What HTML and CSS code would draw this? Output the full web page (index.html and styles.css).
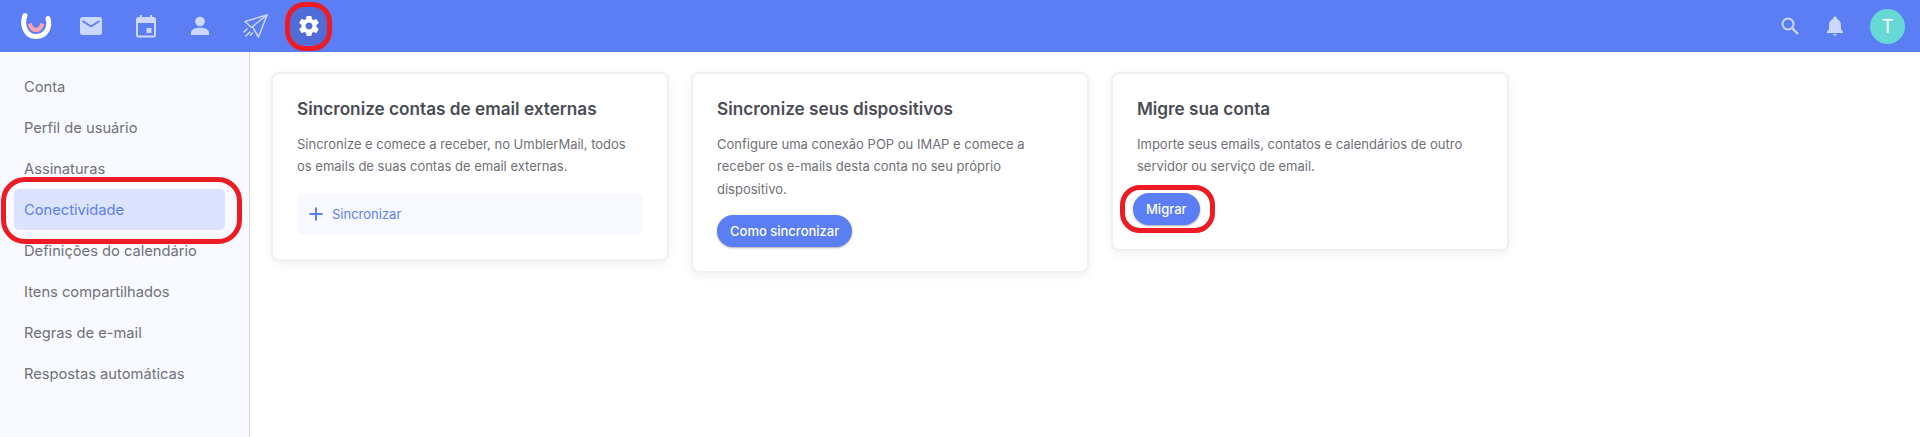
FILE: index.html
```html
<!DOCTYPE html>
<html lang="pt-BR">
<head>
  <meta charset="UTF-8">
  <title>UmblerMail - Conectividade</title>
  <link rel="stylesheet" href="styles.css">
</head>
<body>
  <header class="topbar">
    <nav class="topbar-left">
      <svg class="logo" width="34" height="30" viewBox="0 0 34 30">
        <path d="M6 4.500C2.500 13 6 25.500 17 25.500S31.500 15 29 7.500" fill="none" stroke="#fff" stroke-width="5" stroke-linecap="round"/>
        <path d="M10.500 12.500C12 17 14.500 19 17 19S22 17 23.500 12.500" fill="none" stroke="#ffa3ab" stroke-width="4"/>
      </svg>
      <a class="nav-icon">
        <svg width="24" height="20" viewBox="0 0 24 20">
          <rect x="1" y="1" width="22" height="18" rx="2.500" fill="#ccd8ff"/>
          <path d="M3.500 5l8.500 5.500L20.500 5" fill="none" stroke="#5b7ef5" stroke-width="1.800"/>
        </svg>
      </a>
      <a class="nav-icon">
        <svg width="24" height="24" viewBox="0 0 24 24">
          <path d="M7 1v4M17 1v4" stroke="#ccd8ff" stroke-width="2"/>
          <path d="M4.500 3h15A2.500 2.500 0 0 1 22 5.500v16a2 2 0 0 1-2 2H4a2 2 0 0 1-2-2v-16A2.500 2.500 0 0 1 4.500 3zM4 9v12.500h16V9z" fill="#ccd8ff" fill-rule="evenodd"/>
          <rect x="12.500" y="14" width="5" height="5" fill="#ccd8ff"/>
        </svg>
      </a>
      <a class="nav-icon">
        <svg width="20" height="20" viewBox="0 0 20 20">
          <circle cx="10" cy="5.500" r="4.800" fill="#ccd8ff"/>
          <path d="M1 19v-2.500C1 13.500 5 11.800 10 11.800s9 1.700 9 4.700V19z" fill="#ccd8ff"/>
        </svg>
      </a>
      <a class="nav-icon">
        <svg width="26" height="24" viewBox="0 0 26 24" fill="none" stroke="#ccd8ff" stroke-width="1.500" stroke-linejoin="round" stroke-linecap="round">
          <path d="M25 1L3 7.500l6 5.500 2 .5 1 2 4.500 7.500z"/>
          <path d="M25 1L10 13M5 15l-3 3M8 18l-4 4M10.500 19l-2 2"/>
        </svg>
      </a>
      <a class="nav-icon active">
        <svg width="24" height="24" viewBox="0 0 24 24">
          <path fill="#fff" d="M19.400 13c.04-.33.07-.66.07-1s-.03-.67-.07-1l2.110-1.650c.19-.15.24-.42.120-.64l-2-3.460c-.12-.22-.39-.3-.61-.22l-2.490 1c-.52-.4-1.080-.73-1.690-.98l-.38-2.650C14.460 2.180 14.250 2 14 2h-4c-.25 0-.46.18-.49.420l-.38 2.650c-.61.25-1.170.59-1.690.98l-2.490-1c-.23-.09-.49 0-.61.22l-2 3.460c-.13.22-.07.49.120.640L4.570 11c-.04.33-.07.67-.07 1s.03.67.07 1l-2.110 1.650c-.19.15-.24.42-.12.64l2 3.460c.12.22.39.3.61.22l2.490-1c.52.4 1.080.73 1.690.98l.38 2.650c.03.24.24.42.49.42h4c.25 0 .46-.18.49-.42l.38-2.650c.61-.25 1.170-.59 1.690-.98l2.490 1c.23.09.49 0 .61-.22l2-3.460c.12-.22.07-.49-.12-.64L19.400 13zM12 15.500c-1.930 0-3.500-1.570-3.500-3.500s1.570-3.500 3.500-3.500 3.500 1.570 3.500 3.500-1.570 3.500-3.500 3.500z"/>
        </svg>
      </a>
    </nav>
    <div class="topbar-right">
      <svg width="20" height="20" viewBox="0 0 20 20" fill="none" stroke="#ccd8ff">
        <circle cx="8" cy="8" r="5.500" stroke-width="2"/>
        <path d="M12 12l6 6" stroke-width="2.400"/>
      </svg>
      <svg width="18" height="20" viewBox="0 0 18 20">
        <path fill="#ccd8ff" d="M9 0.500c1.200 0 2 .9 2 2v.5c2.700.8 4 3.200 4 6v4.500l2 2.200V17H1v-1.300l2-2.200V9c0-2.800 1.300-5.200 4-6v-.5c0-1.100.8-2 2-2zM7 18h4c0 1-.9 1.700-2 1.700S7 19 7 18z"/>
      </svg>
      <div class="avatar">T</div>
    </div>
  </header>

  <div class="layout">
    <aside class="sidebar">
      <a class="side-item">Conta</a>
      <a class="side-item">Perfil de usuário</a>
      <a class="side-item">Assinaturas</a>
      <a class="side-item active">Conectividade</a>
      <a class="side-item">Definições do calendário</a>
      <a class="side-item">Itens compartilhados</a>
      <a class="side-item">Regras de e-mail</a>
      <a class="side-item">Respostas automáticas</a>
    </aside>

    <main class="content">
      <section class="card">
        <h2>Sincronize contas de email externas</h2>
        <p>Sincronize e comece a receber, no UmblerMail, todos os emails de suas contas de email externas.</p>
        <a class="sync-row">
          <svg width="16" height="16" viewBox="0 0 16 16"><path d="M8 1.500v13M1.500 8h13" stroke="#5b7ef5" stroke-width="2"/></svg>
          <span>Sincronizar</span>
        </a>
      </section>
      <section class="card">
        <h2>Sincronize seus dispositivos</h2>
        <p>Configure uma conexão POP ou IMAP e comece a receber os e-mails desta conta no seu próprio dispositivo.</p>
        <button class="btn">Como sincronizar</button>
      </section>
      <section class="card">
        <h2>Migre sua conta</h2>
        <p>Importe seus emails, contatos e calendários de outro servidor ou serviço de email.</p>
        <button class="btn btn-migrate">Migrar</button>
      </section>
    </main>
  </div>

  <!-- marcacoes vermelhas por cima da tela -->
  <div class="mark mark-gear"></div>
  <div class="mark mark-side"></div>
  <div class="mark mark-migrate"></div>
</body>
</html>
```

FILE: styles.css
```css
* {
  box-sizing: border-box;
}
html, body {
  height: 100%;
}
body {
  margin: 0;
  font-family: Inter, "Noto Sans", Arial, sans-serif;
  background-color: #fff;
  overflow: hidden;
}
.topbar {
  display: flex;
  justify-content: space-between;
  align-items: center;
  height: 52px;
  padding: 0 15px 0 19px;
  background-color: #5b7ef5;
}
.topbar-left {
  display: flex;
  align-items: center;
}
.logo {
  margin-right: 20px;
}
.nav-icon {
  display: flex;
  align-items: center;
  justify-content: center;
  width: 36px;
  height: 36px;
  margin-right: 18.5px;
  border-radius: 14px;
}
.nav-icon.active {
  width: 38px;
  height: 38px;
  margin-left: -1px;
  background-color: #4f6cd9;
}
.topbar-right {
  display: flex;
  align-items: center;
  gap: 26px;
}
.avatar {
  display: flex;
  align-items: center;
  justify-content: center;
  width: 35px;
  height: 35px;
  border-radius: 50%;
  background-color: #66d9d5;
  color: #fff;
  font-size: 18px;
}
.layout {
  display: flex;
  height: 385px;
}
.sidebar {
  width: 250px;
  padding: 14px 24px 0 14px;
  background-color: #f9faff;
  border-right: 1px solid #d5d8e4;
}
.side-item {
  display: flex;
  align-items: center;
  height: 41px;
  padding-left: 10px;
  border-radius: 5px;
  color: #6f7178;
  font-size: 14.7px;
}
.side-item.active {
  background-color: #dce3ff;
  color: #5b7ef5;
}
.content {
  display: flex;
  align-items: flex-start;
  gap: 22px;
  padding: 20px 21px;
}
.card {
  width: 398px;
  padding: 23px 24px 24px;
  background-color: #fff;
  border: 2px solid #f0f0f2;
  border-radius: 8px;
  box-shadow: 0 3px 8px rgba(40, 50, 80, 0.07);
}
.card h2 {
  margin: 0 0 12px;
  color: #4a4c55;
  font-size: 17.2px;
  font-weight: 600;
  line-height: 24px;
}
.card p {
  margin: 0 0 15px;
  color: #6f7178;
  font-size: 13px;
  line-height: 22.3px;
}
.sync-row {
  display: flex;
  align-items: center;
  gap: 8px;
  height: 42px;
  padding-left: 11px;
  border-radius: 6px;
  background-color: #f8f9fe;
  color: #5b7ef5;
  font-size: 13px;
}
.btn {
  display: block;
  height: 32px;
  padding: 0 13px;
  border: none;
  border-radius: 16px;
  background-color: #5b7ef5;
  box-shadow: 0 1px 2px rgba(40, 40, 60, 0.4);
  color: #fff;
  font-family: inherit;
  font-size: 13px;
  font-weight: 500;
}
.btn-migrate {
  margin-left: -4px;
}
.mark {
  position: absolute;
  border: 5px solid #ed1c24;
}
.mark-gear {
  left: 285px;
  top: 2px;
  width: 47px;
  height: 49px;
  border-radius: 20px;
}
.mark-side {
  left: 1px;
  top: 177px;
  width: 241px;
  height: 67px;
  border-radius: 24px;
}
.mark-migrate {
  left: 1120px;
  top: 185px;
  width: 95px;
  height: 48px;
  border-radius: 20px;
}
```
